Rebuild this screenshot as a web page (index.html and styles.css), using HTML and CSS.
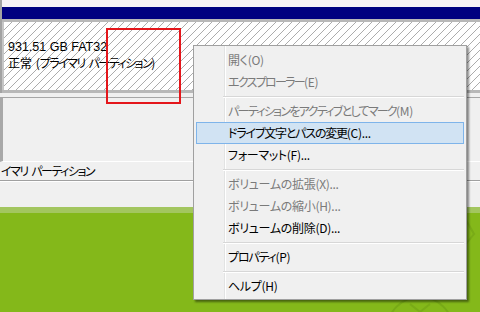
FILE: index.html
```html
<!DOCTYPE html>
<html lang="ja">
<head>
<meta charset="utf-8">
<link rel="stylesheet" href="styles.css">
</head>
<body>
<div class="screen">
  <div class="disk">
    <div class="strip"></div>
    <div class="navy"></div>
    <div class="band"></div>
    <div class="hatch">
      <div class="vol-size">931.51 GB FAT32</div>
      <div class="vol-state">正常 (<span class="kana">プライマリ</span> <span class="kana">パーティション</span>)</div>
    </div>
    <div class="band"></div>
  </div>
  <div class="gap"></div>
  <div class="list"></div>
  <div class="row"><span class="kana">イマリ</span> <span class="kana">パーティション</span></div>
  <div class="light"></div>
  <div class="green-top"></div>
  <div class="green"></div>

  <div class="redbox"></div>

  <svg class="watermark" width="110" height="120" viewBox="0 0 110 120">
    <circle cx="50" cy="130" r="33" fill="none" stroke="#5f8f12" stroke-opacity="0.35" stroke-width="2"/>
    <path d="M40 104 L60 120 M60 104 L40 120" stroke="#5f8f12" stroke-opacity="0.3" stroke-width="2" fill="none"/>
    <path d="M96 20 L104 34 L96 44" stroke="#5f8f12" stroke-opacity="0.3" stroke-width="2" fill="none"/>
  </svg>

  <div class="menu">
    <div class="item off">開く(O)</div>
    <div class="item off"><span class="kana">エクスプローラー</span>(E)</div>
    <div class="sep"></div>
    <div class="item off"><span class="kana">パーティションをアクティブとしてマーク</span>(M)</div>
    <div class="item hot"><span class="mid">ドライブ文字とパスの変更</span>(C)...</div>
    <div class="item">フォーマット(F)...</div>
    <div class="sep"></div>
    <div class="item off">ボリュームの拡張(X)...</div>
    <div class="item off">ボリュームの縮小(H)...</div>
    <div class="item">ボリュームの削除(D)...</div>
    <div class="sep"></div>
    <div class="item"><span class="mid">プロパティ</span>(P)</div>
    <div class="sep"></div>
    <div class="item">ヘルプ(H)</div>
  </div>
</div>
</body>
</html>
```
FILE: styles.css
```css
html, body {
  margin: 0;
  padding: 0;
}
body {
  width: 480px;
  height: 312px;
  overflow: hidden;
  font-family: "Noto Sans CJK JP", "Noto Sans", sans-serif;
  font-size: 12px;
  color: #000;
  background: #84b81a;
}
.screen {
  position: relative;
  width: 480px;
  height: 312px;
  display: flex;
  flex-direction: column;
}
.disk {
  border-left: 2px solid #a3a3a3;
  display: flex;
  flex-direction: column;
}
.strip {
  height: 7px;
  background: #f6f2f5;
}
.navy {
  height: 12px;
  background: #000080;
}
.band {
  height: 3px;
  background: #b8b8b8;
}
.hatch {
  height: 68px;
  box-sizing: border-box;
  border-left: 2px solid #c6c6c6;
  padding: 18px 0 0 4px;
  background-color: #ffffff;
  background-image: linear-gradient(to bottom right, transparent 0 5.2px, #acacac 5.2px 6.1px, transparent 6.1px);
  background-size: 8px 8px;
  font-feature-settings: "palt";
}
.vol-size {
  font-family: "Liberation Sans", Arial, sans-serif;
  font-size: 12.5px;
  line-height: 15px;
}
.vol-state {
  line-height: 15px;
  word-spacing: 1px;
}
.kana {
  letter-spacing: -1.5px;
}
.gap {
  height: 4px;
  background: #f0f0f0;
  border-bottom: 1px solid #a6a6a6;
}
.list {
  height: 63px;
  background: #f0f0f0;
  border-left: 3px solid #a8a8a8;
  border-bottom: 1px solid #ffffff;
}
.row {
  height: 18px;
  line-height: 18px;
  padding-left: 1px;
  background: #f0f0f0;
  border-bottom: 1px solid #a0a0a0;
  font-feature-settings: "palt";
  word-spacing: 1px;
}
.row .kana {
  letter-spacing: -1.5px;
}
.light {
  height: 25px;
  background: #f0f0f0;
  border-top: 1px solid #ffffff;
}
.green-top {
  height: 6px;
  background: #a3c65f;
}
.green {
  flex: 1;
  background: #84b81a;
}
.redbox {
  position: absolute;
  left: 106px;
  top: 28px;
  width: 75px;
  height: 76px;
  box-sizing: border-box;
  border: 2px solid #e4161b;
}
.watermark {
  position: absolute;
  left: 370px;
  top: 200px;
}
.menu {
  position: absolute;
  left: 193px;
  top: 45px;
  width: 274px;
  box-sizing: border-box;
  border: 1px solid #a0a0a0;
  padding: 3px 0 2px;
  background: linear-gradient(to right, #f0f0f0 30px, #e2e3e3 30px 31px, #ffffff 31px 32px, #f0f0f0 32px);
  box-shadow: 2px 2px 2px rgba(0, 0, 0, 0.45);
  font-feature-settings: "palt";
  letter-spacing: -0.3px;
}
.menu .kana {
  letter-spacing: -1.7px;
}
.menu .mid {
  letter-spacing: -1.2px;
}
.item {
  height: 22px;
  line-height: 22px;
  padding-left: 34px;
  white-space: nowrap;
}
.item.off {
  color: #7a7a7a;
}
.item.hot {
  margin: 0 2px;
  box-sizing: border-box;
  background: #d1e3f3;
  border: 1px solid #7eb4ea;
  line-height: 20px;
  padding-left: 31px;
}
.sep {
  height: 1px;
  margin: 3px 2px 2px 29px;
  background: #d7d7d7;
  border-bottom: 1px solid #ffffff;
}
```
